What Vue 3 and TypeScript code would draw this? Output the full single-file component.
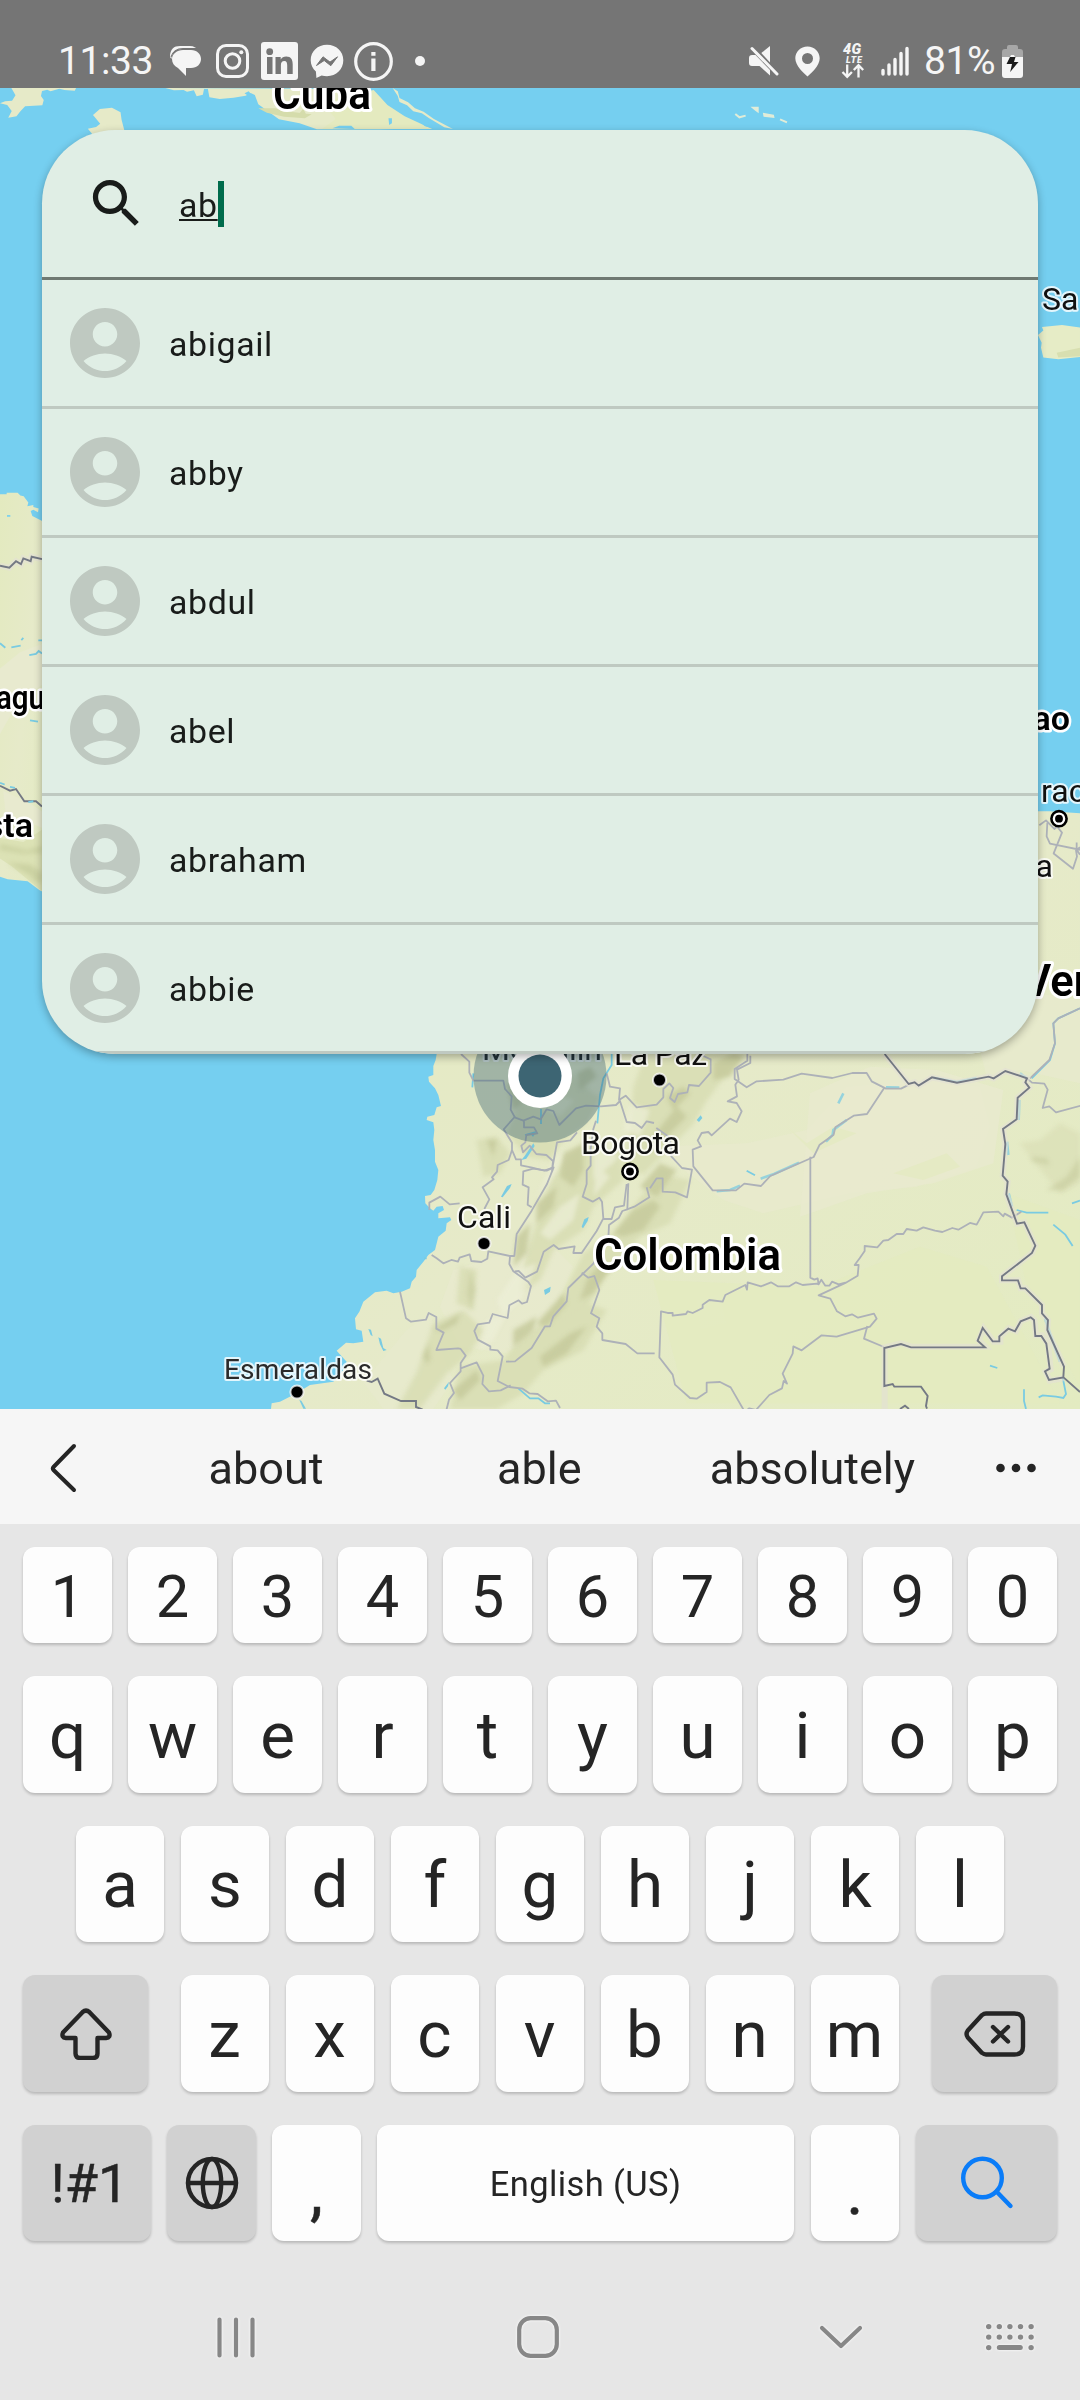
<script setup lang="ts">
interface Key {
  label: string
  kind?: 'shift' | 'delete' | 'globe' | 'search'
  cls?: string
}

const names: string[] = ['abigail', 'abby', 'abdul', 'abel', 'abraham', 'abbie']
const suggestions: string[] = ['about', 'able', 'absolutely']

const letters = (s: string): Key[] => s.split('').map((label) => ({ label }))

const rows: { id: string; keys: Key[] }[] = [
  { id: 'digits', keys: letters('1234567890') },
  { id: 'top', keys: letters('qwertyuiop') },
  { id: 'home', keys: letters('asdfghjkl') },
  {
    id: 'lower',
    keys: [
      { label: '', kind: 'shift', cls: 'dark wide first' },
      ...letters('zxcvbnm'),
      { label: '', kind: 'delete', cls: 'dark wide last' },
    ],
  },
  {
    id: 'bottom',
    keys: [
      { label: '!#1', cls: 'dark sym' },
      { label: '', kind: 'globe', cls: 'dark' },
      { label: ',', cls: 'punct' },
      { label: 'English (US)', cls: 'space' },
      { label: '.', cls: 'punct dot' },
      { label: '', kind: 'search', cls: 'dark go' },
    ],
  },
]

const keyDots: [number, number][] = []
for (let r = 0; r < 3; r++) {
  for (let c = 0; c < 5; c++) {
    if (r < 2 || c === 0 || c === 4) keyDots.push([4.7 + c * 10.6, 4.6 + r * 10.5])
  }
}
</script>

<template>
  <div class="screen">
    <header class="status">
      <span class="time">11:33</span>
      <svg class="i-chat" width="31" height="32" viewBox="0 0 31 32" fill="#f5f5f5">
        <path d="M0 12C0 4 4 1 10 1h10c4 0 6 2 7 3H12C6 4 2 7 1.500 14z" />
        <path d="M13 5h8c6 0 10 4 10 9s-4 9-10 9h-5v8l-8-8c-4-2-6-5-6-9 0-5 5-9 11-9z" />
        <path d="M1 12C3 6 7 3.500 13 3.500h15" fill="none" stroke="#757575" stroke-width="1.200" />
      </svg>
      <svg class="i-insta" width="33" height="34" viewBox="0 0 33 34" fill="none" stroke="#f5f5f5">
        <rect x="1.500" y="1.500" width="30" height="31" rx="8.500" stroke-width="3" />
        <circle cx="16.500" cy="17" r="7.300" stroke-width="3" />
        <circle cx="25.300" cy="8.200" r="2" fill="#f5f5f5" stroke="none" />
      </svg>
      <svg class="i-in" width="37" height="38" viewBox="0 0 37 38">
        <rect width="37" height="38" rx="3" fill="#f5f5f5" />
        <g fill="#757575">
          <circle cx="8.700" cy="9.700" r="3.400" />
          <path d="M6 15h5.500v17H6zM14.500 15h5.200v2.400c1-1.700 3-2.900 5.500-2.900 5 0 6.500 3.200 6.500 8V32h-5.500v-8.500c0-2.500-.5-4.400-2.900-4.400-2.500 0-3.400 1.800-3.400 4.400V32h-5.400z" />
        </g>
      </svg>
      <svg class="i-msgr" width="34" height="35" viewBox="0 0 34 35">
        <path d="M17 .8C7.600.8.700 7.500.700 16.300c0 4.600 2 8.500 5.200 11.200L6.400 34l5.200-2.600c1.700.5 3.500.8 5.400.8 9.400 0 16.300-7 16.300-15.900S26.400.8 17 .8z" fill="#f5f5f5" />
        <path d="M6.500 21.500l6.500-8.700 7 5.300 7.500-5.300-6.700 8.900-6.600-5.200z" fill="#757575" stroke="#757575" stroke-width="1" stroke-linejoin="round" />
      </svg>
      <svg class="i-info" width="39" height="39" viewBox="0 0 39 39">
        <circle cx="19.500" cy="19.500" r="17.800" fill="none" stroke="#f5f5f5" stroke-width="3.200" />
        <path d="M17.300 10h4.200v3.800h-4.200zM17.300 16.500h4.200V29h-4.200z" fill="#f5f5f5" />
      </svg>
      <i class="more-dot"></i>
      <svg class="i-mute" width="30" height="30" viewBox="0 0 30 30" fill="#f5f5f5">
        <path d="M0 12q0-3 3-3h3.500L21 24v5.500L10.500 20H3q-3 0-3-3z" />
        <path d="M21 0v16.500L12.300 7z" />
        <path d="M3 2.500L28 28" stroke="#f5f5f5" stroke-width="3" stroke-linecap="round" />
      </svg>
      <svg class="i-pin" width="25" height="31" viewBox="0 0 25 31">
        <path fill-rule="evenodd" d="M12.500.5C5.600.5.300 5.800.300 12.300c0 7.700 8.500 14.700 12.200 18.200 3.700-3.500 12.200-10.500 12.200-18.200C24.700 5.800 19.400.5 12.500.5zm0 6.500a5.500 5.500 0 1 1 0 11 5.500 5.500 0 0 1 0-11z" fill="#f5f5f5" />
      </svg>
      <svg class="i-lte" width="24" height="36" viewBox="0 0 24 36">
        <text x="2" y="10.500" class="lte-a" textLength="18">4G</text>
        <text x="5" y="19.500" class="lte-b" textLength="16">LTE</text>
        <path d="M6.200 21.500v12M1.500 29l4.700 4.800 4.700-4.800M17.500 34.500V22.500M12.800 27l4.700-4.800 4.700 4.800" fill="none" stroke="#f5f5f5" stroke-width="2.300" />
      </svg>
      <svg class="i-sig" width="29" height="30" viewBox="0 0 29 30" stroke="#f5f5f5" stroke-width="3.400" stroke-linecap="round">
        <path d="M2 24.500v3.500M8 19v9M14 13.500V28M20 7.500V28M26 2.500V28" />
      </svg>
      <span class="pct">81%</span>
      <svg class="i-bat" width="21" height="33" viewBox="0 0 21 33">
        <path d="M5 4V2q0-2 2-2h7q2 0 2 2v2h2q3 0 3 3v8H0V7q0-3 3-3z" fill="#a7a7a7" />
        <path d="M0 12h8l1-2h3l1 2h8v18q0 3-3 3H3q-3 0-3-3z" fill="#f5f5f5" />
        <path d="M8 12h5.500l-1.500 5h4.500L8.200 27l1.800-8H4.500z" fill="#1a1a1a" />
      </svg>
    </header>

    <main class="stage">
      <svg class="map" width="1080" height="1321" viewBox="0 88 1080 1321">
        <defs>
          <linearGradient id="terrain" x1="0" x2="1" y1="0" y2="1">
            <stop offset="0" stop-color="#e3eabf" />
            <stop offset=".5" stop-color="#e6eac9" />
            <stop offset="1" stop-color="#e3ebc1" />
          </linearGradient>
          <filter id="soft" x="-10%" y="-10%" width="120%" height="120%"><feGaussianBlur stdDeviation="7" /></filter>
        </defs>
        <rect y="88" width="1080" height="1321" fill="#75cff0" />

        <!-- Yucatan, Cuba and the Bahamas -->
        <g transform="scale(.3444 .3333)">
          <g fill="#e6eac8">
            <path d="M0 310l15-6 20-2 10-16-12-22h188l-4 8-30-2-15-4-25 8-10-5-15 4-3 15 8 12-4 16-50 3-15 16-10 14-24 4 10-20-13-18z" />
            <path d="M270 345l20-18 35-4 25 14 3 22 8 32v40h-90v-25l-16-20 24-5 12-10z" />
            <path d="M480 264l25 7 28-1 10 5 20-4 8 18 18-5 4-20 10 0 5 28 30 5 40-4 35-6 15-8 12 6 10 28 60 45 60 12 50 18h180l90-2-12-10-55-40-18-15-35-20-8-22-30-12z" />
            <path d="M1140 264l15 10 5 20 25 13 20 18 25 10 30 22 55 30-25-5-45-28-20-14-25-6-18-18-22-10-5-18z" />
            <path d="M1085 270l40 45 50 34 80 38h-320l40-30-40-50z" fill="#e4eabf" />
          </g>
          <path d="M750 325l50 0 25 8 80 10-20 12-60-5-50-12zM870 340l10-14 12 22z" fill="#d5dcab" />
          <path d="M1170 325l15 10 25 5 30 20 22 26-28-7-20-18-22-8zM1128 355l10 0v15l-8 5zM710 280l12-6 12 15-5 5zM965 385l20-8 35 0 10 10z" fill="#75cff0" />
          <path d="M2182 320h24v20l-10-8zM2218 338l32 6 2 10-32-4z" fill="#e0ecd8" transform="translate(-3)" />
          <path d="M2135 342l12 10 18-5M2265 358l20 9" fill="none" stroke="#e0ecd8" stroke-width="2" />
        </g>

        <!-- Nicaragua and Costa Rica -->
        <g transform="translate(0 440) scale(.3333 .4082)">
          <path d="M0 133h20v-4h33l8 7 10 2 14 15-3 9 18-3 0 5 16 4-2 9-14-6-8 3 5 12 28 12 30 10v910l-36-15-20-12-16-10-60-5-23-6z" fill="url(#terrain)" />
          <path d="M0 560l60-40 66-20v100l-70 40-56 80zM10 860l80 30 36 20v40l-60-20-50-20z" fill="#e8eacf" />
          <path d="M0 975l70 10 56-30v150l-30-20-60-40-36-20z" fill="#dce2b5" />
          <path d="M0 990l80 15 46-10v16l-60 2-66-10zM20 1035l70 5 36 20v25l-60-30zM90 1075l36-5v18z" fill="#c7ce9d" opacity=".8" filter="url(#soft)" />
          <path d="M0 308l28 5 20-16 15 7 7-14 22 7 3-11 31 6" class="line-halo" />
          <path d="M0 308l28 5 20-16 15 7 7-14 22 7 3-11 31 6M0 847l30 12 18-4 25 30h35l18 13" class="line-country" />
          <path d="M0 498l16 11M34 508l28-4M64 490l6-5M88 527l20-3 8-7 10 6M115 491h11M90 687l24 3M0 840l14 4M30 850l15 2M85 887l15-2" class="river" />
          <path d="M21 184h10v4H21z" fill="#75cff0" />
        </g>

        <!-- Puerto Rico -->
        <g transform="translate(980 120) scale(.3333 .6122)">
          <path d="M174 351l16-7-4-6 60-3 54 4v48l-65 4-45-3-7-16 2-8z" fill="#e6ecc6" />
          <path d="M230 380l70-8v14l-65 2z" fill="#d8dfb0" />
        </g>

        <!-- Northern South America -->
        <g transform="translate(220 960) scale(.33333)">
          <path
            d="M650 282l-3 18-7 18v27l-15 5 2 15 18 20 10 20 8 33-13 4-7 23-21 5-2 10 20 7 3 23-3 30 5 30v35l10 25-3 30-9 30-11 15-17 3 1 22 14 15 10 7 10-12 18-2 4 12-17 10v15l35-3 4 8-14 10-3 22-22 18-10 40-20 15-13 18-22 27-2 20-13 15-5 20-25 10-25 5-20-8-35 5-35 28-12 30-13 20 3 33 17 4 5 33-30 5-22-2-28 24 30 33-10 25-30 35-70 10-40 25-50 25-25 5-2 17H2580V-440l-90-6-130 0L650 200z"
            fill="url(#terrain)"
          />
          <!-- pale uplands -->
          <g fill="#e8eace">
            <path d="M1300 560l280-10 180-40 120-130 240-20 160 20 30 120-40 120-180 60-200 20-260 60-120-40z" opacity=".75" />
            <path d="M1770 400l180-80 200 10 200 60-30 220-180 60-200 30-200 70z" opacity=".8" />
            <path d="M2250 150l200-50 130 20v250l-180-40-100 20z" opacity=".7" />
            <path d="M700 930l120-40 180-30 60 60-80 180-120 80-140-20-60-120z" opacity=".7" />
            <path d="M560 1110l70-50 30 100 40 100-60 87H490l-60-80z" opacity=".6" />
            <path d="M1430 1020l70-20 20 90-80 20z" opacity=".5" />
          </g>
          <path d="M1700 500l60 50 80-50 70 20-130 60zM2020 640l160-60 40 40-110 40z" fill="#e5eac4" />
          <path d="M1300 960l500 20 300-120 200 60 120 220 100 190H1400zM2360 700l220 80v500l-160-300z" fill="#e3ebbf" opacity=".8" />

          <!-- hill shading -->
          <g fill="#d8ddb3" filter="url(#soft)" opacity=".85">
            <path d="M770 540l60-10 40 50-30 60-50 10zM860 520l40-90 60 10 60 30 70-80 50 20-40 80-80 60-30 50-70-10z" />
            <path d="M1000 640l80-80 60-20 60 30 10 90-90 80-30 70-90 60-40 90-60 40 20-120z" />
            <path d="M1090 880l90-60 90-120 80-50 60 10-60 130-90 40-50 60-60 60-70 140-100 60-60 110-60-20 70-120 80-80z" />
            <path d="M880 360l60-60 100 30 80 70-60 20-80-30zM1240 380l30-80 160-20 150 2-60 60-60 80-40 70-90 90-60 60-60-20 20-90z" />
            <path d="M640 1090l90-40 60 60-40 70-70 60-80 107h-70l60-110zM720 1220l130-20 60-80 100-30 90-60 60 20-70 120-120 60-60 70-80 47H690z" />
            <path d="M720 920l50 10-10 120-50-20z" />
            <path d="M2400 550l60-10 60-50 60 30v150l-60 30-50-60z" opacity=".7" />
          </g>
          <g fill="#c6ca9c" filter="url(#soft)" opacity=".85">
            <path d="M1030 580l60-30 0 80-30 50-40-30zM950 730l60-50-10 60-50 50zM890 830l40-40-10 90-40 40z" />
            <path d="M1180 820l60-70 60-30 20 20-50 70-60 20zM1100 960l50-60 20 30-50 70-40 20zM950 1090l80-90 10 30-60 70z" />
            <path d="M1480 310l60-30 30 10-40 60-50 10zM1340 410l50-30 20 20-50 50zM1290 540l80-100 30 30-70 70zM1260 680l60-70 50 20-60 80z" />
            <path d="M880 1110l70-40-10 40-60 50zM960 1190l90-70 50-20-60 80-70 40zM700 1290l70-60 10 30-60 60zM610 1190l15-40 5 50-10 10zM640 1110l80-50-10 30-40 20z" />
            <path d="M750 930l16 60-14 60-10-50zM2480 690l60-40 40-60v60l-50 40zM2430 590l50 5 10 20-50-10z" opacity=".7" />
            <path d="M1070 340l40-20 20 30-50 40zM800 540l30 0-10 50zM860 370l30 0 20 60-30 20zM940 300l60 30 30 40-60-10z" />
          </g>
          <g fill="#edefd8" filter="url(#soft)" opacity=".7">
            <path d="M1120 560l60-30 10 70-70 60zM960 820l60-80 60-40-20 80-70 60zM830 1020l60-90 60-20-40 100-60 60zM1130 620l40 30-50 60zM1000 600l30-40-20 80-60 70zM1230 430l60 20-30 80-50-20zM800 1080l60-20-40 80-40 30z" />
          </g>

          <!-- water -->
          <path d="M843 710l18-32 14-6-5 12-22 28zM1085 800l8-22 13-7-3 12-14 22zM972 990l20-10-2 15-15 10zM445 1107l8 2 5 20-6-4zM475 1132l8 4 7 28 10 6-10 3-10-20zM238 1320l6 2 14 24h-8zM672 1285l15-20-3 14-8 10zM940 550l4 8-25 38-15 4 10-12zM1430 480l12-14 5 8-10 12z" fill="#79cbe2" />
          <path d="M760 340l-3 42M963 447v45M1175 270v45l-25 40-10 50-8 85M915 525l30-8-8 12M895 1285l35 30 25 0 20 15 15 0M1580 632l25 14M2310 1217l22 7M2390 750l30 8 65 0M2500 794l36 30 22 34M2556 730l24-8M2412 1288v35l6 24M2456 1312l12-6 40 4 22 4 8-12-10-50" class="river" />
          <path d="M1490 694l40-4 30-13M1622 656l40-14 75-34M1818 545l20-20 2-15 40-30M1855 430l15-30M1998 382l40 1M2140 353l70 13 60-12M2400 340l20 15M2398 420l-2 60M2361 545l4 40M2366 700l10 40M2475 1075l20 60 25 70" class="river thin" />
          <path d="M2435 355l55-55 15-50-5-60 15-15 65-30" class="river" />

          <!-- department borders -->
          <g class="line-state">
            <path d="M723 282l25 23v33l12 24h90l5 25 20 22-3 40 12 22-33 37 25 40v22l-10 30-33 15-2 20-15 17 5 6-33 24 20 36-15 29" />
            <path d="M884 472l26 10 30-12 22 8 18-30 20 5 18 42 50-50 30-8 45 2 45-4 12-12 20 63 25 3 20 15 15-20 22 5M912 482v20h30l10 18-33 5-3 22-12 10 5 20 20-20 20 25 30 3 20 18-3 27 15-83 40-6 20-24" />
            <path d="M876 570l12 28 15 0 0 18 30 6 40 10 28-10-20 50-46 80-45 70-7 66-13 0-65-14-3 22-18 10-30-3-5-20-30 10-5 12-20-5-24 10-20-15-15-10" />
            <path d="M1000 622l-20 10-40-6-30 8-2 40 18 8-3 52 12 8M870 890l-2 22 12 22 45 32 8 12-12 48-15 5-10-10-28 15-5 38-45-12-10 26-35 5-10 20 10 26 38 20v10l22 2 15 18-15 74 35 18 40 5 20 14 25 2 30 22 25-2 12 22" />
            <path d="M884 934l12-1 20 20 35-18 20-60 30-20 15 12 48-8-4 20 25 0 45-66 20-38-4-50-8-12-20 12-30-15 12-38 0-40 12-15v-50l8-60 8-25M1220 672l-8 65-27 5-10 35-25 0M1225 670l-3 78-15 5-10 20-30 22-2 40-45 76-75 73-5 40-40 45-10 30-15 0-40 65-50 40-27 1M1085 938l20 15 18-5 15 42-25 70 25 15-8 25 17 20v20l70 12 35 28h52M628 750v-22l33-18 28 23 30-3M540 995l18 80 15 10 45-6 8-20 23 12 0 35 22 12-22 52 65-5 8 2 15 20-15 22v25l-32 35 12 30-15 20-10 40M722 1225l48-18 20 40-3 25 20 22 35-3 30-15" />
            <path d="M1160 340l10 40 30 5-3 35 20-13 33 35 60-8 20-22 0-25 18-17 12 14-10 30 14 12 10-24 28-5 5-22 30 3 35-40V298l-22-10M1582 282v20l-38 25 0 30 36 25 30-18 80-5 55-18 92 13 60-15h43l15 25 43 22h45l20-10M1994 382l-53 80-40 5-55 35-5 22-42 30-18 37-130 57-28 30-50-7-25 20-70 0-58-72-2-50 25-10-10-18 12-22 20-3 10 10 55-50 20 10 15-32-15-25-27-5 28-15-5-35 10-15-5-30 40-20v-22M1290 685l20-30 18 0 0 40 38 2 35 15 15-83-30-5-32-35 0-35-10-25-35-25M1280 682l8 30-45 28-22 8" />
            <path d="M1771 590v363l12 6 10-4 3 18 8-14 12 18 12 0 8-12 20 8 20-5M1878 968l-82 38 35 10 20 38 25 15 20-6 18 10 48-12 8 15-20 24-100 30-45-4-60 45-25-12-2 22-30 60 13 30-10-8-5 22-38 20-40 45-20-5-14 10-42-73-32-16-40 2v28l-30 20-20-2-45-40-7-30-40-52 5-138 20 5 15 0 0 8 40-5 5-8 15 5 30-15 0-10 20-14 40 5 8-20 60-30 5 14 2-22 40 12 30-12 20 12 35 0 20-12 20 8 43-4 5 2M1875 970l38-23 3-32-12 0 15-20 15-22 0-15 38 4 18-20 15-2 25-18 20 0 10-15 30 5 20-10 35 10 22 4 30-12 18 5 35-20 20 5 12-22 8-15 45-2 15 14 4-8 22 12 28-18" />
            <path d="M1942 1098l-10 38 60 25M2422 356l14 12 37 3 10 18-15 55 20-5 20 18 75-20M2430 355l58-55 17-50-5-60 15-15 65-30" />
          </g>
          <g transform="translate(2280 -2520) scale(1 1.8367)" class="line-state">
            <path d="M178 1152l20-8 25 14 8-4 15 10-25 34 58 25 12-20-3-10 12-5M202 1148l-2 22 10 12 90 10M290 1180v12l10 8" />
          </g>

          <!-- national borders -->
          <g class="line-halo">
            <path d="M1994 1347v-185l50-12 30 10h222l-20-20 15-35 30 40 20 0 0-15 25-25 22 8 15-30 30-12 10 10 5 45 18 0 18 27 8 75-15 8 12 26 43-8" />
            <path d="M1994 282l72 90 18-5 12 10 40-25 75 16 95-18 15 5 35-22 65 22-5 12 12 16-35 30-3 65-41 29 7 45-8 95 15 18-4 38 32 88 22-4 33 70-10 22-90 70v12h48l8 24h14l50 50 0 25 18 20-2 30 50 110" />
          </g>
          <g class="line-country">
            <path d="M1994 282l72 90 18-5 12 10 40-25 75 16 95-18 15 5 35-22 65 22-5 12 12 16-35 30-3 65-41 29 7 45-8 95 15 18-4 38 32 88 22-4 33 70-10 22-90 70v12h48l8 24h14l50 50 0 25 18 20-2 30 50 110-2 32-43 8-12-26 14-8-10-75-15-23h-18l-4-48-10-8-30 12-17 30-20-8-27 23 0 15h-20l-30-40-15 38 22 20h-222l-30-10-50 12v114l25-6 5 8h80l20 28-5 30 3 8M2528 1250l52 46" transform="translate(-288)" />
            <path d="M440 1262l15 4 18-10 20 45 50 22h45v18l20 8" />
            <path d="M2040 1347l15-10 12 10" />
          </g>
          <path d="M620 895l-8 0" class="river" />
        </g>

        <g class="label big">
          <text x="273" y="109" textLength="98" lengthAdjust="spacingAndGlyphs">Cuba</text>
          <text x="594" y="1270" textLength="187" lengthAdjust="spacingAndGlyphs">Colombia</text>
          <text x="1023" y="996">Ven</text>
        </g>
        <g class="label country">
          <text x="-4" y="709" textLength="49" lengthAdjust="spacingAndGlyphs">agu</text>
          <text x="33" y="837" text-anchor="end">sta</text>
          <text x="1070" y="730" text-anchor="end">ao</text>
        </g>
        <g class="label city">
          <text x="1042" y="310">Sa</text>
          <text x="1041" y="802">rac</text>
          <text x="1053" y="877" text-anchor="end">a</text>
          <text x="482" y="1060" textLength="120">Medellin</text>
          <text x="614" y="1065" textLength="93">La Paz</text>
          <text x="581" y="1154" textLength="99">Bogota</text>
          <text x="457" y="1228" textLength="54">Cali</text>
          <text x="224" y="1379" textLength="148" class="small">Esmeraldas</text>
        </g>
        <g stroke="#fff" stroke-opacity=".75" stroke-width="2">
          <circle cx="659.500" cy="1080" r="6.600" />
          <circle cx="484" cy="1243.500" r="6.600" />
          <circle cx="297" cy="1392" r="6.600" />
        </g>
        <g fill="#fff" stroke="#000" stroke-width="2.600">
          <circle cx="630" cy="1171.500" r="7.600" />
          <circle cx="1059" cy="818.700" r="7.600" />
        </g>
        <circle cx="630" cy="1171.500" r="3.900" />
        <circle cx="1059" cy="818.700" r="3.900" />

        <!-- current location, above terrain and labels -->
        <circle cx="540" cy="1076" r="66.500" fill="#3d6573" fill-opacity=".4" />
        <circle cx="540" cy="1076" r="32" fill="#fff" />
        <circle cx="540" cy="1076" r="21.500" fill="#3d6573" />
      </svg>

      <section class="card">
        <div class="search">
          <svg width="63" height="63" viewBox="0 0 24 24" fill="#191c1a">
            <path d="M15.500 14h-.79l-.28-.27C15.410 12.590 16 11.110 16 9.500 16 5.910 13.090 3 9.500 3S3 5.910 3 9.500 5.910 16 9.500 16c1.610 0 3.090-.59 4.230-1.570l.27.28v.79l5 4.990L20.490 19l-4.990-5zm-6 0C7.010 14 5 11.990 5 9.500S7.010 5 9.500 5 14 7.010 14 9.500 11.990 14 9.500 14z" />
          </svg>
          <span class="query">ab</span><i class="caret"></i>
        </div>
        <div v-for="n in names" :key="n" class="row">
          <svg width="84" height="84" viewBox="0 0 24 24">
            <path fill-rule="evenodd" fill="#bfc9c1" d="M12 2C6.480 2 2 6.480 2 12s4.480 10 10 10 10-4.480 10-10S17.520 2 12 2zm0 4c1.930 0 3.500 1.570 3.500 3.500S13.930 13 12 13s-3.500-1.570-3.500-3.500S10.070 6 12 6zm0 14c-2.030 0-4.430-.82-6.140-2.880C7.550 15.800 9.680 15 12 15s4.450.8 6.140 2.120C16.430 19.180 14.030 20 12 20z" />
          </svg>
          <span>{{ n }}</span>
        </div>
      </section>
    </main>

    <section class="suggest">
      <svg class="back" width="28" height="52" viewBox="0 0 28 52" fill="none" stroke="#252525" stroke-width="4" stroke-linecap="round" stroke-linejoin="round">
        <path d="M25 4L4.500 25q-1.500 1.500 0 3L25 48" />
      </svg>
      <span v-for="s in suggestions" :key="s">{{ s }}</span>
      <svg class="dots" width="40" height="10" viewBox="0 0 40 10" fill="#252525">
        <circle cx="4.500" cy="5" r="4.300" /><circle cx="20" cy="5" r="4.300" /><circle cx="35.500" cy="5" r="4.300" />
      </svg>
    </section>

    <section class="keyboard">
      <div v-for="r in rows" :key="r.id" class="keys" :class="r.id">
        <div v-for="(k, i) in r.keys" :key="i" class="key" :class="k.cls">
          <svg v-if="k.kind === 'shift'" width="52" height="52" viewBox="0 0 52 52" class="ico">
            <path d="M22.500 4.200q3.500-3.200 7 0L49 24.500q2 5-3 5.500h-8.500v15.500q0 4.500-4.500 4.500H20q-4.500 0-4.500-4.500V30H6q-5-.5-3-5.500z" />
          </svg>
          <svg v-else-if="k.kind === 'delete'" width="62" height="46" viewBox="0 0 62 46" class="ico">
            <path d="M22 2.500h28.500q8.500 0 8.500 8v25q0 8-8.500 8H22q-2 0-4-1.600L3.800 26.500q-2.500-3.500 0-7L18 4.100q2-1.600 4-1.600zM29 16l15 14.500M44 16L29 30.500" />
          </svg>
          <svg v-else-if="k.kind === 'globe'" width="54" height="54" viewBox="0 0 54 54" class="ico">
            <circle cx="27" cy="27" r="24" /><ellipse cx="27" cy="27" rx="9.200" ry="24" /><path d="M3 27h48" />
          </svg>
          <svg v-else-if="k.kind === 'search'" width="54" height="54" viewBox="0 0 54 54" class="ico blue">
            <circle cx="22.500" cy="22" r="19.300" /><path d="M36.500 35.500L50.500 50" />
          </svg>
          <template v-else>{{ k.label }}</template>
        </div>
      </div>
    </section>

    <nav class="nav">
      <svg width="38" height="41" viewBox="0 0 38 41" class="n-recent"><path d="M2.500 2.500v36M19 2.500v36M35.500 2.500v36" /></svg>
      <svg width="42" height="42" viewBox="0 0 42 42" class="n-home"><rect x="2.200" y="2.200" width="37.600" height="37.600" rx="11.500" /></svg>
      <svg width="44" height="25" viewBox="0 0 44 25" class="n-down"><path d="M3 3l19 18L41 3" /></svg>
      <svg width="52" height="30" viewBox="0 0 52 30" class="n-kb">
        <circle v-for="(d, i) in keyDots" :key="i" :cx="d[0]" :cy="d[1]" r="2.700" />
        <path d="M15.300 25.600h21" />
      </svg>
    </nav>
  </div>
</template>

<style>
body {
  margin: 0;
  background: #e6e6e6;
}
</style>

<style scoped>
.screen {
  width: 1080px;
  height: 2400px;
  overflow: hidden;
  display: flex;
  flex-direction: column;
  background: #e6e6e6;
  font-family: Roboto, 'Liberation Sans', sans-serif;
  color: #252525;
}
svg {
  display: block;
  flex: none;
}

/* status bar */
.status {
  height: 88px;
  flex: none;
  box-sizing: border-box;
  padding: 34px 0 0 58px;
  display: flex;
  align-items: center;
  background: #757575;
  color: #f5f5f5;
  font-size: 39px;
  line-height: 52px;
}
.time {
  width: 112px;
  flex: none;
  letter-spacing: -0.4px;
}
.i-insta { margin-left: 15px; }
.i-in { margin-left: 12px; }
.i-msgr { margin-left: 12px; }
.i-info { margin-left: 10px; }
.more-dot {
  width: 10px;
  height: 10px;
  border-radius: 50%;
  background: #f5f5f5;
  margin-left: 22px;
}
.i-mute { margin-left: 324px; }
.i-pin { margin-left: 16px; }
.i-lte { margin-left: 21px; }
.i-sig { margin-left: 16px; }
.lte-a, .lte-b {
  fill: #f5f5f5;
  font-weight: 900;
  font-style: italic;
  font-size: 14.5px;
}
.lte-b { font-size: 9px; }
.pct {
  width: 78px;
  margin-left: 14px;
  letter-spacing: -0.4px;
}

/* map */
.stage {
  height: 1321px;
  flex: none;
  display: grid;
  overflow: hidden;
}
.map, .card { grid-area: 1 / 1; }
.map path { vector-effect: non-scaling-stroke; }
.line-state, .line-state path {
  fill: none;
  stroke: #adb1b8;
  stroke-width: 1.8px;
  stroke-linejoin: round;
}
.line-country, .line-country path {
  fill: none;
  stroke: #747984;
  stroke-width: 1.9px;
}
.line-country path[transform] { transform: none; }
.line-halo, .line-halo path {
  fill: none;
  stroke: #e2dfd6;
  stroke-width: 6px;
  stroke-opacity: 0.6;
}
.river {
  fill: none;
  stroke: #79cbe2;
  stroke-width: 1.8px;
}
.river.thin { stroke-width: 2.6px; stroke-opacity: 0.75; }
.label text {
  paint-order: stroke;
  stroke: #fff;
  stroke-linejoin: round;
  fill: #000;
}
.big text { font-size: 43.5px; font-weight: 600; stroke-width: 6px; }
.country text { font-size: 34px; font-weight: 600; stroke-width: 5px; }
.city text { font-size: 32px; stroke-width: 4px; stroke-opacity: 0.8; fill: #111; }
.city text.small { font-size: 28px; fill: #2a2a2a; }

/* search card */
.card {
  width: 996px;
  height: 924px;
  margin: 42px 0 0 42px;
  border-radius: 73.5px;
  overflow: hidden;
  background: #e0eee5;
  box-shadow: 0 3px 9px rgba(0, 0, 0, 0.3);
  position: relative;
  color: #191c1a;
  font-size: 33.9px;
  letter-spacing: 0.6px;
}
.search {
  height: 147px;
  border-bottom: 3px solid #6f7972;
  display: flex;
  align-items: center;
  padding-left: 43px;
}
.query {
  width: 39px;
  margin-left: 31px;
  padding-top: 3px;
  text-decoration: underline;
  text-decoration-thickness: 1.8px;
  text-underline-offset: 2.4px;
  text-decoration-skip-ink: none;
}
.caret {
  width: 5.5px;
  height: 46px;
  background: #006c4c;
}
.row {
  height: 126px;
  border-bottom: 3px solid #bfc9c1;
  display: flex;
  align-items: center;
  padding-left: 21px;
}
.row span { margin-left: 22px; padding-top: 3px; }

/* suggestions */
.suggest {
  height: 115px;
  flex: none;
  display: grid;
  grid-template-columns: 129.5px repeat(3, 273.2px) 1fr;
  align-items: center;
  background: #f6f6f6;
  font-size: 45px;
}
.suggest span { text-align: center; padding-top: 4px; }
.back { margin-left: 48.5px; margin-top: 2px; }
.dots { margin-left: 46.5px; margin-top: 2px; }

/* keyboard */
.keyboard {
  flex: none;
  padding: 23px 23px 0;
}
.keys {
  display: flex;
  gap: 16px;
  height: 117px;
  margin-bottom: 33px;
}
.keys.digits { height: 96px; }
.keys.home { height: 116px; padding-left: 53px; gap: 17px; }
.keys.lower { height: 117px; gap: 17px; }
.keys.bottom { height: 116px; margin-bottom: 0; }
.key {
  width: 89px;
  flex: none;
  box-sizing: border-box;
  display: flex;
  align-items: center;
  justify-content: center;
  padding-top: 2px;
  border-radius: 12px;
  background: #fdfdfd;
  box-shadow: 0 2px 3px rgba(0, 0, 0, 0.2);
  font-size: 65.5px;
  line-height: 1;
}
.digits .key { font-size: 59.500px; padding-top: 6px; }
.home .key, .lower .key { width: 88px; }
.key.dark { background: #d1d1d1; padding-top: 0; }
.lower .key.wide { width: 125px; }
.key.first { margin-right: 15.5px; }
.key.last { margin-left: 16.5px; }
.key.sym { width: 128px; font-size: 54px; padding: 2px 0 0 5px; -webkit-text-stroke: 0.5px #252525; }
.key.space { width: 417px; font-size: 34.5px; letter-spacing: 0.4px; }
.key.punct { padding-top: 17px; -webkit-text-stroke: 0.5px #252525; }
.key.dot { width: 88px; margin-left: 1px; }
.key.go { width: 141px; margin-left: 1px; }
.ico {
  fill: none;
  stroke: #252525;
  stroke-width: 4.4px;
  stroke-linecap: round;
  stroke-linejoin: round;
}
.ico.blue { stroke: #0a7cf8; }

/* navigation bar */
.nav {
  flex: 1;
  display: flex;
  align-items: center;
  padding-top: 33px;
  padding-left: 217px;
}
.nav svg {
  fill: none;
  stroke: #878787;
  stroke-width: 4.2px;
  stroke-linecap: round;
  stroke-linejoin: round;
  overflow: visible;
  filter: drop-shadow(0 0 1.5px #fff);
}
.n-home { margin-left: 262px; }
.n-down { margin-left: 260px; }
.n-kb { margin-left: 121px; }
.nav .n-kb circle { fill: #878787; stroke: none; }
.nav .n-kb path { stroke-width: 5px; }
</style>
